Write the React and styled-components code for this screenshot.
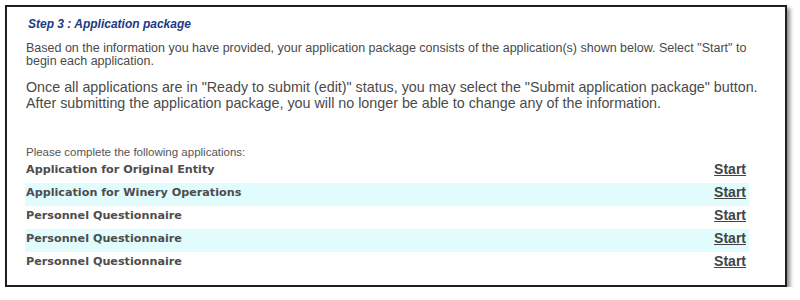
import React from "react";
import styled, { createGlobalStyle } from "styled-components";

const GlobalStyle = createGlobalStyle`
  html, body {
    margin: 0;
    padding: 0;
    background: #ffffff;
  }
  body {
    font-family: "Liberation Sans", Arial, sans-serif;
  }
`;

const Frame = styled.section`
  box-sizing: border-box;
  margin: 5px 0 0 5px;
  width: 782px;
  height: 282px;
  border: 2px solid #1e1e1e;
  box-shadow: 3px 3px 4px rgba(0, 0, 0, 0.45);
  padding: 9px 22px 0 18px;
  background: #fff;
`;

const Title = styled.h2`
  margin: 0 0 0 3px;
  font-size: 12px;
  font-style: italic;
  font-weight: bold;
  color: #1d3a86;
  line-height: 16px;
`;

const Intro = styled.p`
  margin: ${(p) => p.$top}px 0 0 0;
  padding-left: 1px;
  font-size: ${(p) => p.$size}px;
  line-height: ${(p) => p.$lh}px;
  color: #4a4a4a;
`;

const ListLabel = styled.div`
  margin: 34px 0 1px 0;
  padding-left: 1px;
  font-size: 11.5px;
  line-height: 14px;
  color: #555;
`;

const List = styled.ul`
  list-style: none;
  margin: 0 14px 0 0;
  padding: 0;
`;

const Row = styled.li`
  box-sizing: border-box;
  display: flex;
  justify-content: space-between;
  align-items: center;
  height: 23px;
  padding: 0 3px 5px 1px;
  background: ${(p) => (p.$alt ? "#e2fcfd" : "transparent")};
`;

const AppName = styled.span`
  font-family: "DejaVu Sans", Verdana, sans-serif;
  font-weight: bold;
  font-size: 11.2px;
  color: #4d4d4d;
`;

const StartLink = styled.a`
  font-weight: bold;
  font-size: 14px;
  color: #444;
  text-decoration: underline;
  cursor: pointer;
`;

const apps = [
  "Application for Original Entity",
  "Application for Winery Operations",
  "Personnel Questionnaire",
  "Personnel Questionnaire",
  "Personnel Questionnaire",
];

export default function App() {
  return (
    <>
      <GlobalStyle />
      <Frame>
        <Title>Step 3 : Application package</Title>
        <Intro $top={10} $size={12.5} $lh={13}>
          Based on the information you have provided, your application package
          consists of the application(s) shown below. Select "Start" to begin
          each application.
        </Intro>
        <Intro $top={11} $size={14.3} $lh={16}>
          Once all applications are in "Ready to submit (edit)" status, you may
          select the "Submit application package" button. After submitting the
          application package, you will no longer be able to change any of the
          information.
        </Intro>
        <ListLabel>Please complete the following applications:</ListLabel>
        <List>
          {apps.map((name, i) => (
            <Row key={i} $alt={i % 2 === 1}>
              <AppName>{name}</AppName>
              <StartLink>Start</StartLink>
            </Row>
          ))}
        </List>
      </Frame>
    </>
  );
}
